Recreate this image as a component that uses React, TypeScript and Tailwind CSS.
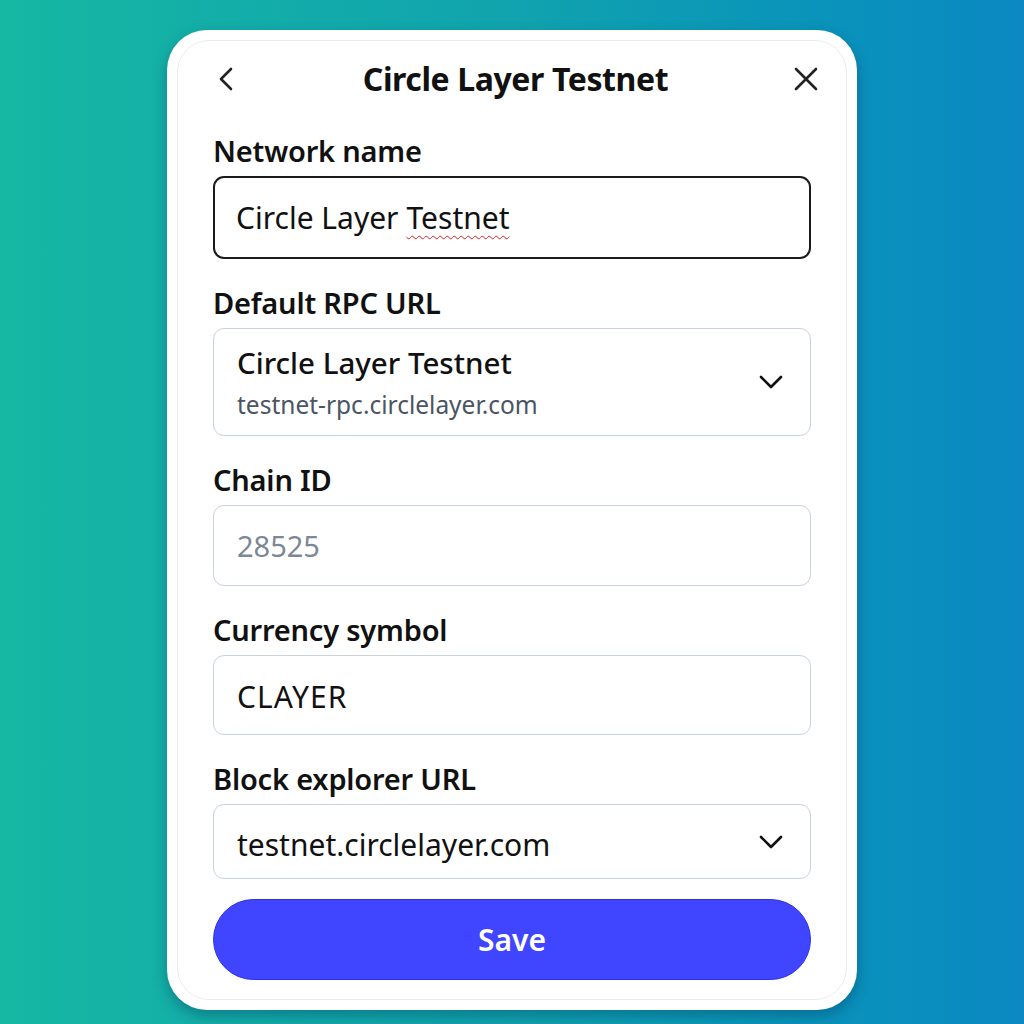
import React from "react";

const font = { fontFamily: '"Noto Sans", "Open Sans", sans-serif' };

function Chevron() {
  return (
    <svg width="24" height="16" viewBox="0 0 24 16" fill="none" className="shrink-0">
      <path d="M2 3l10 10L22 3" stroke="#111" strokeWidth="2.6" strokeLinecap="round" strokeLinejoin="round" />
    </svg>
  );
}

function Label({ children }: { children: React.ReactNode }) {
  return (
    <div className="text-[29px] leading-[28px] font-semibold text-[#111] tracking-[-0.2px]">
      {children}
    </div>
  );
}

export default function App() {
  return (
    <div
      className="w-[1024px] h-[1024px] bg-linear-to-r from-[#16b7a3] via-[#11a3ae] to-[#0b88c2] flex justify-center pt-[30px]"
      style={font}
    >
      <div className="w-[690px] h-[980px] bg-white rounded-[40px] p-[10px] shadow-[0_6px_14px_rgba(0,40,80,0.35)]">
        <div className="h-full rounded-[32px] border border-[#ececec] px-[35px] flex flex-col">
          {/* header */}
          <div className="h-[76px] flex items-center justify-between">
            <svg width="24" height="26" viewBox="0 0 24 26" fill="none" className="ml-[1px]">
              <path d="M17 3L7 13l10 10" stroke="#222" strokeWidth="2.6" strokeLinecap="round" strokeLinejoin="round" />
            </svg>
            <div className="text-[32px] font-bold text-[#111] tracking-[-0.4px]">Circle Layer Testnet</div>
            <svg width="26" height="26" viewBox="0 0 26 26" fill="none" className="mr-[-8px]">
              <path d="M3 3l20 20M23 3L3 23" stroke="#222" strokeWidth="2.6" strokeLinecap="round" />
            </svg>
          </div>

          <div className="mt-[20px]">
            <Label>Network name</Label>
            <div className="mt-[11px] h-[83px] rounded-[11px] border-2 border-[#1b1b1b] flex items-center px-[21px] text-[30px] text-[#111]">
              Circle Layer{" "}
              <span className="ml-[8px] underline decoration-wavy decoration-[#e02020] decoration-[1px] underline-offset-[6px]">
                Testnet
              </span>
            </div>
          </div>

          <div className="mt-[30px]">
            <Label>Default RPC URL</Label>
            <div className="mt-[11px] h-[108px] rounded-[11px] border-[1.5px] border-[#c8d2de] flex items-center justify-between pl-[23px] pr-[27px]">
              <div className="flex flex-col">
                <span className="text-[29.5px] leading-[34px] font-medium text-[#111]">Circle Layer Testnet</span>
                <span className="mt-[11px] text-[24.5px] leading-[28px] text-[#4b5563]">testnet-rpc.circlelayer.com</span>
              </div>
              <Chevron />
            </div>
          </div>

          <div className="mt-[30px]">
            <Label>Chain ID</Label>
            <div className="mt-[11px] h-[81px] rounded-[11px] border-[1.5px] border-[#c8d2de] flex items-center px-[23px] text-[29px] text-[#7c8896]">
              28525
            </div>
          </div>

          <div className="mt-[30px]">
            <Label>Currency symbol</Label>
            <div className="mt-[11px] h-[80px] rounded-[11px] border-[1.5px] border-[#c8d2de] flex items-center px-[23px] pt-[2px] text-[30px] tracking-[1px] text-[#111]">
              CLAYER
            </div>
          </div>

          <div className="mt-[30px]">
            <Label>Block explorer URL</Label>
            <div className="mt-[11px] h-[75px] rounded-[11px] border-[1.5px] border-[#c8d2de] flex items-center justify-between pl-[23px] pr-[27px]">
              <span className="pt-[6px] text-[30px] text-[#111]">testnet.circlelayer.com</span>
              <Chevron />
            </div>
          </div>

          <button className="mt-[20px] h-[81px] w-full rounded-full bg-[#4046ff] border border-[#2a2ee6] text-white text-[30px] font-semibold">
            Save
          </button>
        </div>
      </div>
    </div>
  );
}
